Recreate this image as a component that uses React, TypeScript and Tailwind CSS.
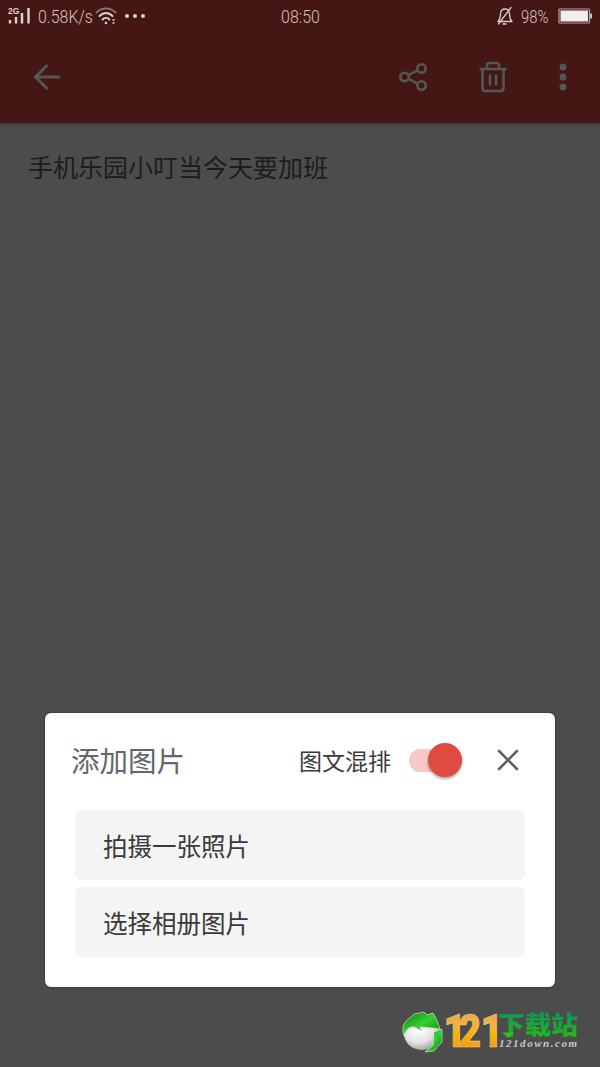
import React, { useState } from "react";

const SignalIcon = () => (
  <svg width="23" height="20" viewBox="0 0 23 20" className="shrink-0">
    <text x="0" y="7.5" fontSize="8.5" fontWeight="bold" fill="#dcd3d2" fontFamily="Liberation Sans, sans-serif">
      2G
    </text>
    <path d="M2 14v3.5M8 11v6.5M14 7v10.500M20.500 2v15.500" stroke="#dcd3d2" strokeWidth="2.4" />
  </svg>
);

const WifiIcon = () => (
  <svg width="22" height="20" viewBox="0 0 22 20" fill="none" strokeLinecap="round" className="shrink-0">
    <path d="M1.500 6.500C7 1 15 1 20.500 6.500" stroke="#8f7371" strokeWidth="1.800" />
    <path d="M4.500 10C8.500 6 13.500 6 17.500 10M7.500 13.500c2-2 5-2 7 0" stroke="#dcd3d2" strokeWidth="1.900" />
    <circle cx="11" cy="17" r="1.300" fill="#dcd3d2" />
    <path d="M18 14h1M18 17h1" stroke="#dcd3d2" strokeWidth="1.500" />
  </svg>
);

const MuteIcon = () => (
  <svg width="18" height="20" viewBox="0 0 18 20" fill="none" stroke="#d5cac9" strokeWidth="1.300" strokeLinecap="round" strokeLinejoin="round" className="shrink-0">
    <path d="M2 15.500h14c-2-2-2.500-4-2.500-7.500 0-3-1.500-5-4.500-5S4.500 5 4.500 8c0 3.500-.5 5.500-2.500 7.500zM7 18h3M15 1.500L2.500 18" />
  </svg>
);

const BatteryIcon = () => (
  <svg width="35" height="18" viewBox="0 0 35 18" className="shrink-0">
    <rect x="1" y="2" width="30.500" height="14" rx="1" fill="none" stroke="#b5a3a1" strokeWidth="1.200" />
    <rect x="2.500" y="3.500" width="27.500" height="11" fill="#f0ecec" />
    <path d="M33 6.500v5" stroke="#c9bbba" strokeWidth="2" />
  </svg>
);

const BackIcon = () => (
  <svg width="28" height="28" viewBox="0 0 28 28" fill="none" stroke="#535755" strokeWidth="2.900">
    <path d="M27 14H2.500M14.500 2L2.500 14l12 12" />
  </svg>
);

const ShareIcon = () => (
  <svg width="28" height="28" viewBox="0 0 28 28" fill="none" stroke="#535755" strokeWidth="2.600">
    <circle cx="5.500" cy="14" r="4.200" />
    <circle cx="22.500" cy="5.500" r="4.200" />
    <circle cx="22.500" cy="22.500" r="4.200" />
    <path d="M9.300 12.100l9.400-4.700M9.300 15.900l9.400 4.700" />
  </svg>
);

const TrashIcon = () => (
  <svg width="28" height="32" viewBox="0 0 28 32" fill="none" stroke="#535755" strokeWidth="2.600">
    <path d="M.5 8h27M8 8V4.500Q8 2 10.500 2h7Q20 2 20 4.500V8M3.500 8v19q0 3 3 3h15q3 0 3-3V8M11 13.500v11M17 13.500v11" />
  </svg>
);

const MoreIcon = () => (
  <svg width="8" height="28" viewBox="0 0 8 28" fill="#535755">
    <circle cx="4" cy="4" r="3.500" />
    <circle cx="4" cy="14" r="3.500" />
    <circle cx="4" cy="24" r="3.500" />
  </svg>
);

const CloseIcon = () => (
  <svg width="22" height="22" viewBox="0 0 22 22" fill="none" stroke="#606060" strokeWidth="2.600" strokeLinecap="round">
    <path d="M2 2l18 18M20 2L2 20" />
  </svg>
);

const SiteLogo = () => (
  <svg width="178" height="44" viewBox="0 0 178 44" className="overflow-visible">
    <defs>
      <radialGradient id="ball" cx="0.4" cy="0.35" r="0.7">
        <stop offset="0" stopColor="#fff" />
        <stop offset="0.6" stopColor="#e4e4e4" />
        <stop offset="1" stopColor="#999" />
      </radialGradient>
      <linearGradient id="leaf" x1="0" y1="0" x2="1" y2="1">
        <stop offset="0" stopColor="#087b0b" />
        <stop offset="0.5" stopColor="#38cf35" />
        <stop offset="1" stopColor="#07850b" />
      </linearGradient>
      <linearGradient id="gold" gradientUnits="userSpaceOnUse" x1="0" y1="5" x2="0" y2="38">
        <stop offset="0" stopColor="#e9a94c" />
        <stop offset="0.45" stopColor="#f3b33e" />
        <stop offset="0.55" stopColor="#f9b800" />
        <stop offset="1" stopColor="#f59a16" />
      </linearGradient>
      <linearGradient id="green" gradientUnits="userSpaceOnUse" x1="0" y1="4" x2="0" y2="28">
        <stop offset="0" stopColor="#129257" />
        <stop offset="1" stopColor="#20bd17" />
      </linearGradient>
    </defs>
    <ellipse cx="20" cy="25" rx="18" ry="16" fill="url(#ball)" />
    <path d="M1 23C0 16 4 11 9 8L12 5l6-1 4-1 3 3 6-2 3 5 4 11-8-1-12-1 2 4-8-4c-5 0-8 2-10 9z" fill="url(#leaf)" stroke="#e7f5e5" strokeWidth="0.600" />
    <path d="M32 23l8-3v13l-8 9-9 1 8-7z" fill="url(#leaf)" stroke="#e7f5e5" strokeWidth="0.600" />
    <text transform="scale(0.85 1)" x="48.8 66.5 92.5" y="38" fontSize="46" fontWeight="900" fill="url(#gold)" stroke="#f6cf79" strokeWidth="0.600" fontFamily="Roboto, sans-serif">
      121
    </text>
    <text x="96" y="25" fontSize="25" fontWeight="900" textLength="80" lengthAdjust="spacingAndGlyphs" fill="url(#green)" fontFamily="Noto Sans CJK SC, sans-serif">
      下载站
    </text>
    <path d="M100 23.500l6 5.500 6-5.500z" fill="#2bc51d" />
    <text x="97" y="38" fontSize="11" fontStyle="italic" fontWeight="bold" textLength="78" lengthAdjust="spacing" fill="#c9c9c9" fontFamily="Liberation Serif, serif">
      121down.com
    </text>
  </svg>
);

const options = ["拍摄一张照片", "选择相册图片"];

const App: React.FC = () => {
  const [mixed, setMixed] = useState(true);

  return (
    <div
      className="flex h-[1067px] w-[600px] flex-col overflow-hidden bg-[#4c4c4c]"
      style={{ fontFamily: '"Noto Sans CJK SC", sans-serif' }}
    >
      <header className="h-[124px] shrink-0 border-b border-[#424141] bg-[#451714] shadow-[0_1px_3px_rgba(0,0,0,0.25)]">
        {/* Status bar */}
        <div className="grid h-8 grid-cols-3 items-center pl-2 pr-[7px] font-['Roboto'] text-[19px] font-light leading-none text-[#cfc2c1]">
          <div className="flex items-center">
            <SignalIcon />
            <span className="ml-[7px] w-[57px] origin-left scale-x-[0.84] whitespace-nowrap">0.58K/s</span>
            <WifiIcon />
            <div className="ml-2 flex gap-1">
              <span className="size-[4px] rounded-full bg-[#dcd3d2]" />
              <span className="size-[4px] rounded-full bg-[#dcd3d2]" />
              <span className="size-[4px] rounded-full bg-[#dcd3d2]" />
            </div>
          </div>
          <span className="scale-x-[0.84] text-center">08:50</span>
          <div className="flex items-center justify-end">
            <MuteIcon />
            <span className="ml-[7px] mr-[7px] w-[30px] origin-left scale-x-[0.78] whitespace-nowrap">98%</span>
            <BatteryIcon />
          </div>
        </div>

        {/* Toolbar */}
        <div className="flex h-[90px] items-center px-[33px]">
          <button><BackIcon /></button>
          <div className="ml-auto flex items-center">
            <button><ShareIcon /></button>
            <button className="ml-[52px]"><TrashIcon /></button>
            <button className="ml-[52px]"><MoreIcon /></button>
          </div>
        </div>
      </header>

      <main className="flex-1 px-7 pt-[23px]">
        <p className="text-[25px] leading-[38px] text-[#1d1d1d]">手机乐园小叮当今天要加班</p>
      </main>

      {/* Add picture dialog */}
      <section className="mx-[45px] h-[274px] shrink-0 rounded-md bg-white shadow-[0_0_3px_rgba(0,0,0,0.4)]">
        <div className="flex h-[97px] items-center pb-[3px] pl-[26px] pr-9">
          <h2 className="text-[28.500px] leading-none text-[#666]">添加图片</h2>
          <span className="ml-auto text-[23px] leading-none text-[#3c3c3c]">图文混排</span>
          <button
            onClick={() => setMixed(!mixed)}
            className={`ml-[18px] mr-[35px] flex h-[23px] w-[53px] items-center rounded-full bg-[#f6c8c6] ${mixed ? "justify-end" : "justify-start"}`}
          >
            <span className="size-[34px] rounded-full bg-[#df4a41] shadow-[0_2px_3px_rgba(0,0,0,0.35)]" />
          </button>
          <button><CloseIcon /></button>
        </div>
        <div className="mx-[30px] flex flex-col gap-[7px]">
          {options.map((option) => (
            <button key={option} className="h-[70px] rounded-md bg-[#f4f4f4] pl-7 pt-[3px] text-left text-[24.500px] text-[#3a3a3a]">
              {option}
            </button>
          ))}
        </div>
      </section>

      <footer className="flex h-[80px] shrink-0 justify-end pr-5 pt-[22px]">
        <SiteLogo />
      </footer>
    </div>
  );
};

export default App;
